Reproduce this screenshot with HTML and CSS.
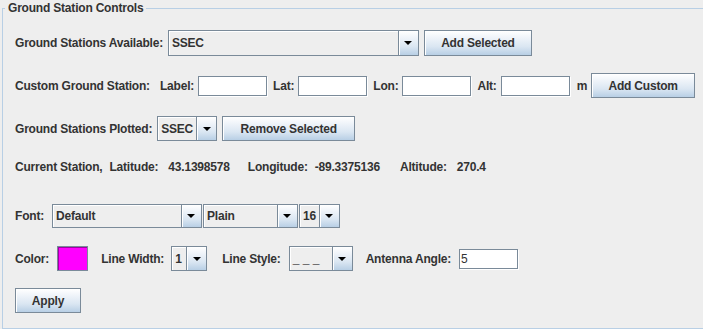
FILE: index.html
```html
<!DOCTYPE html>
<html lang="en">

<head>
    <meta charset="UTF-8">
    <title>Ground Station Controls</title>
    <link rel="stylesheet" href="styles.css">
</head>

<body>
    <!-- Titled panel -->
    <fieldset class="controls">
        <legend>Ground Station Controls</legend>

        <div class="rows">
            <!-- Available stations -->
            <div class="row row-available">
                <span class="lbl">Ground Stations Available:</span>
                <div class="combo combo-available">
                    <span class="combo-value">SSEC</span>
                    <span class="combo-arrow"></span>
                </div>
                <button class="btn btn-add-selected">Add Selected</button>
            </div>

            <!-- Custom station -->
            <div class="row row-custom">
                <span class="lbl">Custom Ground Station:</span>
                <span class="lbl lbl-label">Label:</span>
                <input type="text" class="field field-label">
                <span class="lbl lbl-after">Lat:</span>
                <input type="text" class="field field-coord">
                <span class="lbl lbl-after">Lon:</span>
                <input type="text" class="field field-coord">
                <span class="lbl lbl-after">Alt:</span>
                <input type="text" class="field field-coord">
                <span class="lbl lbl-unit">m</span>
                <button class="btn btn-add-custom">Add Custom</button>
            </div>

            <!-- Plotted stations -->
            <div class="row row-plotted">
                <span class="lbl">Ground Stations Plotted:</span>
                <div class="combo combo-plotted">
                    <span class="combo-value">SSEC</span>
                    <span class="combo-arrow"></span>
                </div>
                <button class="btn btn-remove">Remove Selected</button>
            </div>

            <!-- Current station readout -->
            <div class="row row-current">
                <span class="lbl">Current Station,</span>
                <span class="lbl cur-lat">Latitude:</span>
                <span class="lbl cur-val">43.1398578</span>
                <span class="lbl cur-lon">Longitude:</span>
                <span class="lbl cur-lon-val">-89.3375136</span>
                <span class="lbl cur-alt">Altitude:</span>
                <span class="lbl cur-val">270.4</span>
            </div>

            <!-- Font -->
            <div class="row row-font">
                <span class="lbl">Font:</span>
                <div class="combo combo-font">
                    <span class="combo-value">Default</span>
                    <span class="combo-arrow"></span>
                </div>
                <div class="combo combo-style">
                    <span class="combo-value">Plain</span>
                    <span class="combo-arrow"></span>
                </div>
                <div class="combo combo-size">
                    <span class="combo-value">16</span>
                    <span class="combo-arrow"></span>
                </div>
            </div>

            <!-- Line options -->
            <div class="row row-line">
                <span class="lbl">Color:</span>
                <span class="swatch"></span>
                <span class="lbl lbl-width">Line Width:</span>
                <div class="combo combo-width">
                    <span class="combo-value">1</span>
                    <span class="combo-arrow"></span>
                </div>
                <span class="lbl lbl-style">Line Style:</span>
                <div class="combo combo-linestyle">
                    <span class="combo-value">_ _ _</span>
                    <span class="combo-arrow"></span>
                </div>
                <span class="lbl lbl-angle">Antenna Angle:</span>
                <input type="text" class="field field-angle" value="5">
            </div>

            <!-- Apply -->
            <div class="row row-apply">
                <button class="btn btn-apply">Apply</button>
            </div>
        </div>
    </fieldset>
</body>

</html>
```

FILE: styles.css
```css
/* General */
html,
body {
    margin: 0;
    padding: 0;
    overflow: hidden;
}

body {
    background-color: #eeeeee; /* Metal panel grey */
    color: #333333;
    font-family: "Liberation Sans", Arial, sans-serif;
    font-size: 12px;
    font-weight: bold;
    letter-spacing: -0.2px;
    width: 703px;
    height: 329px;
}

/* Titled border, runs off the right edge */
.controls {
    box-sizing: border-box;
    width: 701px;
    height: 329px;
    margin: 0 0 0 2px;
    padding: 0 0 0 2px;
    border: 1px solid #b8cfe5;
    border-right: none;
}

.controls legend {
    padding: 0 3px;
    line-height: 16px;
    font-size: 12px;
    font-weight: bold;
    color: #333333;
}

.rows {
    display: flex;
    flex-direction: column;
    padding-left: 10px;
}

/* Rows */
.row {
    display: flex;
    align-items: center;
    height: 25px;
}

.row-available { margin-top: 14px; height: 26px; }
.row-custom { margin-top: 17px; }
.row-plotted { margin-top: 18px; }
.row-current { margin-top: 16px; height: 20px; }
.row-font { margin-top: 27px; height: 24px; }
.row-line { margin-top: 18px; }
.row-apply { margin-top: 17px; }

.lbl {
    white-space: nowrap;
}

/* Buttons */
.btn {
    box-sizing: border-box;
    height: 100%;
    padding: 0;
    margin: 0;
    border: 1px solid #7a8a99;
    box-shadow: inset 1px 1px 0 #ffffff;
    background: linear-gradient(to bottom, #ffffff 0%, #eef3f9 30%, #dae6f2 65%, #b8cfe5 100%);
    font-family: "Liberation Sans", Arial, sans-serif;
    font-size: 12px;
    font-weight: bold;
    letter-spacing: -0.2px;
    color: #333333;
}

.btn.btn-add-selected { width: 108px; margin-left: 5px; }
.btn.btn-add-custom { width: 104px; margin-left: 4px; }
.btn.btn-remove { width: 133px; margin-left: 5px; }
.btn.btn-apply { width: 66px; }

/* Combo boxes */
.combo {
    box-sizing: border-box;
    display: flex;
    height: 100%;
    border: 1px solid #7a8a99;
    background-color: #eeeeee;
}

.combo-value {
    flex: 1;
    display: flex;
    align-items: center;
    padding-left: 3px;
    box-shadow: inset 1px 1px 0 #ffffff;
    white-space: nowrap;
    overflow: hidden;
    color: #333333;
}

.combo-arrow {
    box-sizing: border-box;
    width: 20px;
    display: flex;
    align-items: center;
    justify-content: center;
    border-left: 1px solid #7a8a99;
    box-shadow: inset 1px 1px 0 #ffffff;
    background: linear-gradient(to bottom, #ffffff 0%, #eef3f9 30%, #dae6f2 65%, #b8cfe5 100%);
}

.combo-arrow::after {
    content: "";
    border-left: 4px solid transparent;
    border-right: 4px solid transparent;
    border-top: 4px solid #000000;
}

.combo-available { width: 251px; margin-left: 5px; }
.combo-plotted { width: 60px; margin-left: 5px; }
.combo-font { width: 150px; margin-left: 8px; }
.combo-style { width: 95px; margin-left: 1px; }
.combo-size { width: 41px; margin-left: 1px; }
.combo-width { width: 36px; margin-left: 7px; }
.combo-linestyle { width: 64px; margin-left: 8px; }

.combo-linestyle .combo-value {
    color: #000000;
    letter-spacing: 0;
}

/* Text fields */
.field {
    box-sizing: border-box;
    height: 20px;
    padding: 0 2px;
    border: 1px solid #7a8a99;
    box-shadow: 1px 1px 0 #ffffff;
    background-color: #ffffff;
    font-family: "Liberation Sans", Arial, sans-serif;
    font-size: 12px;
    font-weight: normal;
    color: #333333;
    outline: none;
}

.field.field-label { width: 69px; margin: 0 0 0 4px; }
.field.field-coord { width: 69px; margin: 0 0 0 4px; }
.field.field-angle { width: 59px; margin: 0 0 0 8px; padding: 0 1px; }

.lbl-label { margin-left: 10px; }
.lbl-after { margin-left: 6px; }
.lbl-unit { margin-left: 7px; }

/* Current station readout */
.cur-lat { margin-left: 7px; }
.cur-val { margin-left: 10px; }
.cur-lon { margin-left: 18px; }
.cur-lon-val { margin-left: 7px; }
.cur-alt { margin-left: 20px; }

/* Line options */
.swatch {
    box-sizing: border-box;
    width: 31px;
    height: 25px;
    margin-left: 8px;
    border: 1px solid #7a8a99;
    box-shadow: inset 1px 1px 0 #a000a0;
    background-color: #ff00ff;
}

.lbl-width { margin-left: 13px; }
.lbl-style { margin-left: 15px; }
.lbl-angle { margin-left: 13px; }
```
